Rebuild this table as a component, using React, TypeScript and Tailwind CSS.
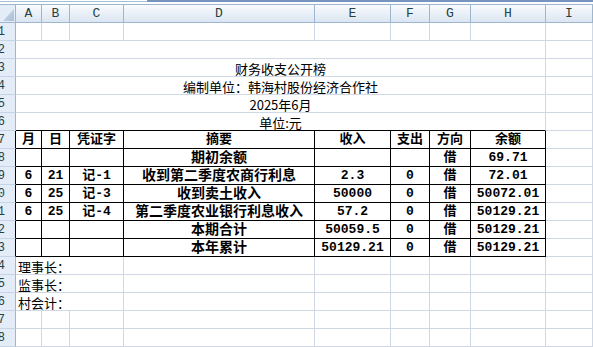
import React from 'react'

const GRID = 'grid grid-cols-[16px_26px_28px_54px_191px_76px_39px_41px_75px_1fr] h-[18px]'
const GRIDLINE = 'border-r border-b border-[#d0d7e5]'
const BOX = 'border-r border-b border-black'
const CJK = "font-['Noto_Sans_CJK_SC',sans-serif]"
const TABLE_FONT = "font-['Liberation_Mono','Noto_Sans_CJK_SC',monospace] font-bold text-[13px]"

const letters = ['A', 'B', 'C', 'D', 'E', 'F', 'G', 'H', 'I']

const tableRows = [
  { n: 7, cells: ['月', '日', '凭证字', '摘要', '收入', '支出', '方向', '余额'] },
  { n: 8, cells: ['', '', '', '期初余额', '', '', '借', '69.71'] },
  { n: 9, cells: ['6', '21', '记-1', '收到第二季度农商行利息', '2.3', '0', '借', '72.01'] },
  { n: 10, cells: ['6', '25', '记-3', '收到卖土收入', '50000', '0', '借', '50072.01'] },
  { n: 11, cells: ['6', '25', '记-4', '第二季度农业银行利息收入', '57.2', '0', '借', '50129.21'] },
  { n: 12, cells: ['', '', '', '本期合计', '50059.5', '0', '借', '50129.21'] },
  { n: 13, cells: ['', '', '', '本年累计', '50129.21', '0', '借', '50129.21'] },
]

function RowHead({ n, dark }: { n: number; dark?: boolean }) {
  return (
    <div
      className={`flex items-center justify-end overflow-hidden pr-[10px] bg-[#e4ecf7] border-b border-b-[#c5d4e6] border-r ${
        dark ? 'border-r-black' : 'border-r-[#9eb6ce]'
      } font-['Liberation_Mono',monospace] text-[12px] leading-none text-[#27413e]`}
    >
      <span>{n}</span>
    </div>
  )
}

function EmptyCells({ count }: { count: number }) {
  return (
    <>
      {Array.from({ length: count }).map((_, i) => (
        <div key={i} className={GRIDLINE} />
      ))}
    </>
  )
}

// merged A:H row with centred text
function MergedRow({ n, text, boxBottom }: { n: number; text?: string; boxBottom?: boolean }) {
  return (
    <div className={GRID}>
      <RowHead n={n} />
      <div
        className={`col-span-8 flex items-end justify-center border-r border-r-[#d0d7e5] border-b ${
          boxBottom ? 'border-b-black' : 'border-b-[#d0d7e5]'
        } ${CJK} text-[13px] leading-[14px] text-black`}
      >
        {text}
      </div>
      <div className={GRIDLINE} />
    </div>
  )
}

function SignRow({ n, text }: { n: number; text: string }) {
  return (
    <div className={GRID}>
      <RowHead n={n} />
      <div className={`col-span-3 flex items-end pl-[2px] ${GRIDLINE} ${CJK} text-[13px] leading-[14px] whitespace-nowrap text-black`}>
        {text}
      </div>
      <EmptyCells count={6} />
    </div>
  )
}

export default function App() {
  return (
    <div className="w-[593px] h-[347px] overflow-hidden bg-white">
      {/* formula bar edge */}
      <div className="flex h-[2px]">
        <div className="w-[147px] border-b border-[#a9bdd5] bg-white" />
        <div className="flex-1 bg-[#7895c0]" />
      </div>
      <div className="h-[2px] bg-white" />
      <div className="h-px bg-[#9eb6ce]" />

      {/* column headers */}
      <div className={GRID}>
        <div className="relative bg-[#e4ecf7] border-r border-b border-[#9eb6ce]">
          <svg className="absolute right-[1px] bottom-[1px]" width="11" height="12" viewBox="0 0 11 12">
            <defs>
              <linearGradient id="corner" x1="0" y1="0" x2="1" y2="1">
                <stop offset="0" stopColor="#d3deeb" />
                <stop offset="1" stopColor="#a9bdd6" />
              </linearGradient>
            </defs>
            <polygon points="11,0 11,12 0,12" fill="url(#corner)" />
          </svg>
        </div>
        {letters.map(l => (
          <div
            key={l}
            className="flex items-center justify-center bg-gradient-to-b from-[#f9fbfd] to-[#dbe5f2] border-r border-b border-[#9eb6ce] font-['Liberation_Mono',monospace] text-[13px] leading-none text-[#27413e]"
          >
            {l}
          </div>
        ))}
      </div>

      {/* row 1 */}
      <div className={GRID}>
        <RowHead n={1} />
        <EmptyCells count={9} />
      </div>

      <MergedRow n={2} />
      <MergedRow n={3} text="财务收支公开榜" />
      <MergedRow n={4} text="编制单位：韩海村股份经济合作社" />
      <MergedRow n={5} text="2025年6月" />
      <MergedRow n={6} text="单位:元" boxBottom />

      {/* bordered table */}
      {tableRows.map(r => (
        <div key={r.n} className={GRID}>
          <RowHead n={r.n} dark />
          {r.cells.map((c, i) => (
            <div
              key={i}
              className={`flex items-center justify-center whitespace-nowrap overflow-hidden ${BOX} ${TABLE_FONT} ${
                i === 3 && r.n > 7 ? 'text-[14px]' : ''
              } leading-none text-black`}
            >
              {c}
            </div>
          ))}
          <div className={GRIDLINE} />
        </div>
      ))}

      <SignRow n={14} text="理事长：" />
      <SignRow n={15} text="监事长：" />
      <SignRow n={16} text="村会计：" />

      {[17, 18].map(n => (
        <div key={n} className={GRID}>
          <RowHead n={n} />
          <EmptyCells count={9} />
        </div>
      ))}
    </div>
  )
}
